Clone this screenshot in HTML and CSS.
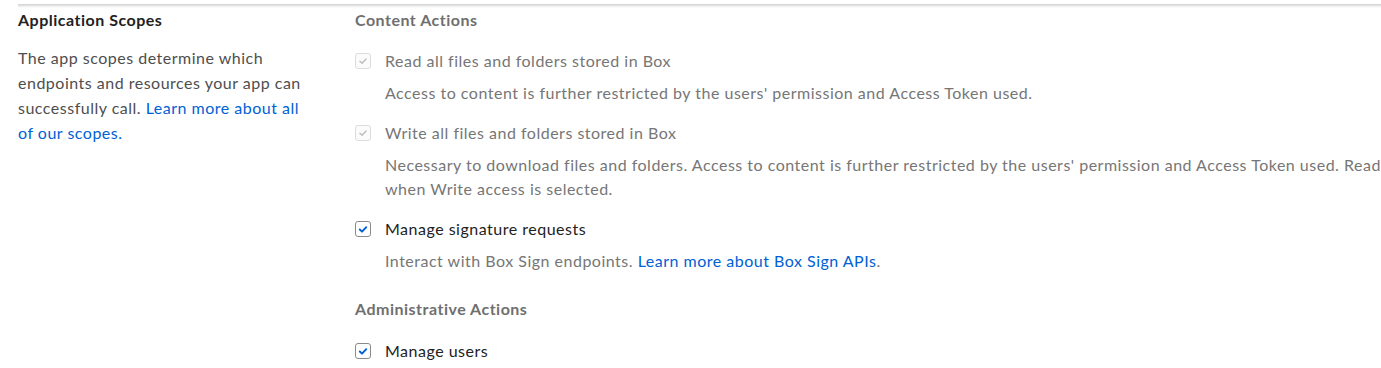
FILE: index.html
```html
<!DOCTYPE html>
<html>
<head>
<meta charset="utf-8">
<link rel="stylesheet" href="styles.css">
</head>
<body>
<div class="page">
  <div class="divider"></div>
  <div class="section">
    <div class="side">
      <h2 class="side-title">Application Scopes</h2>
      <p class="side-desc">The app scopes determine which endpoints and resources your app can successfully call. <a href="#" class="link">Learn more about all of our scopes.</a></p>
    </div>
    <div class="main">
      <div class="group">
        <h3 class="group-title">Content Actions</h3>
        <div class="item">
          <div class="item-row">
            <span class="cb cb-disabled"><svg viewBox="0 0 16 16" width="16" height="16"><path d="M4.5 8.3 L7 10.6 L11.5 5.8" fill="none" stroke="#bdbdbd" stroke-width="1.6" stroke-linecap="round" stroke-linejoin="round"/></svg></span>
            <span class="item-label label-disabled">Read all files and folders stored in Box</span>
          </div>
          <p class="item-desc">Access to content is further restricted by the users' permission and Access Token used.</p>
        </div>
        <div class="item">
          <div class="item-row">
            <span class="cb cb-disabled"><svg viewBox="0 0 16 16" width="16" height="16"><path d="M4.5 8.3 L7 10.6 L11.5 5.8" fill="none" stroke="#bdbdbd" stroke-width="1.6" stroke-linecap="round" stroke-linejoin="round"/></svg></span>
            <span class="item-label label-disabled">Write all files and folders stored in Box</span>
          </div>
          <p class="item-desc">Necessary to download files and folders. Access to content is further restricted by the users' permission and Access Token used. Read when Write access is selected.</p>
        </div>
        <div class="item">
          <div class="item-row">
            <span class="cb cb-on"><svg viewBox="0 0 16 16" width="16" height="16"><path d="M4.3 8.6 L6.9 11 L11.7 5.9" fill="none" stroke="#0061d5" stroke-width="2.2" stroke-linecap="round" stroke-linejoin="round"/></svg></span>
            <span class="item-label">Manage signature requests</span>
          </div>
          <p class="item-desc">Interact with Box Sign endpoints. <a href="#" class="link">Learn more about Box Sign APIs</a>.</p>
        </div>
      </div>
      <div class="group">
        <h3 class="group-title">Administrative Actions</h3>
        <div class="item">
          <div class="item-row">
            <span class="cb cb-on"><svg viewBox="0 0 16 16" width="16" height="16"><path d="M4.3 8.6 L6.9 11 L11.7 5.9" fill="none" stroke="#0061d5" stroke-width="2.2" stroke-linecap="round" stroke-linejoin="round"/></svg></span>
            <span class="item-label">Manage users</span>
          </div>
        </div>
      </div>
    </div>
  </div>
</div>
</body>
</html>
```

FILE: styles.css
```css
html, body {
  margin: 0;
  padding: 0;
  background: #fff;
}
body {
  font-family: Lato, "Open Sans", sans-serif;
  font-size: 16px;
  letter-spacing: 0.5px;
  color: #222;
}
.page {
  padding: 4px 0 0 18px;
}
.divider {
  height: 4px;
  background: linear-gradient(#cfcfcf, #f4f4f4 70%, #fff);
}
.section {
  display: flex;
}
.side {
  width: 337px;
  flex: none;
}
.side-title {
  margin: 0;
  font-size: 16px;
  font-weight: 700;
  line-height: 24px;
  color: #222;
}
.side-desc {
  margin: 13px 0 0;
  width: 292px;
  line-height: 25px;
  color: #4e4e4e;
}
.link {
  color: #0061d5;
  text-decoration: none;
}
.main {
  flex: 1;
  min-width: 0;
}
.group {
  margin-bottom: 24px;
}
.group:last-child {
  margin-bottom: 0;
}
.group-title {
  margin: 0 0 17px;
  font-size: 16px;
  font-weight: 700;
  line-height: 24px;
  color: #6f6f6f;
}
.group + .group .group-title {
  margin-bottom: 18px;
}
.item {
  margin-bottom: 16px;
}
.group:last-child .item:last-child {
  margin-bottom: 0;
}
.item-row {
  display: flex;
  align-items: center;
  gap: 14px;
  height: 24px;
}
.cb {
  width: 16px;
  height: 16px;
  box-sizing: border-box;
  border-radius: 3px;
  display: inline-flex;
  align-items: center;
  justify-content: center;
  flex: none;
}
.cb svg {
  width: 14px;
  height: 14px;
}
.cb-disabled {
  border: 1px solid #dcdcdc;
  background: #fbfbfb;
}
.cb-on {
  border: 1px solid #8a8a8a;
  background: #fff;
}
.item-label {
  line-height: 24px;
  color: #222;
}
.label-disabled {
  color: #767676;
}
.item-desc {
  margin: 8px 0 0 30px;
  line-height: 24px;
  color: #767676;
}
```
